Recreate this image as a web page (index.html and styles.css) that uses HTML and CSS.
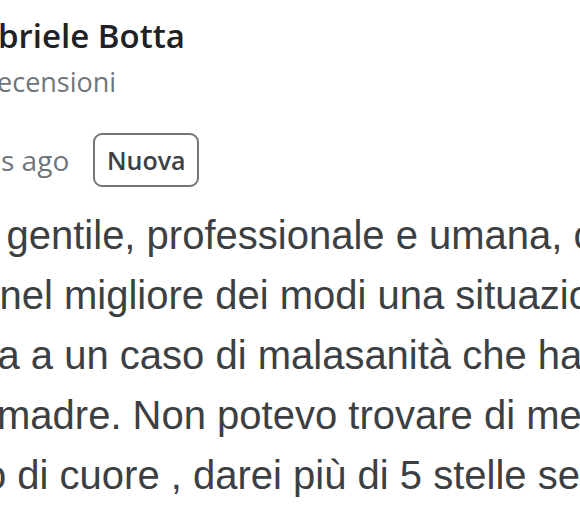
FILE: index.html
```html
<!DOCTYPE html>
<html lang="it">
<head>
<meta charset="utf-8">
<title>Recensione</title>
<link rel="stylesheet" href="styles.css">
</head>
<body>
<div class="review">
  <div class="author">
    <div class="name">briele Botta</div>
    <div class="meta">recensioni</div>
  </div>
  <div class="date-row">
    <span class="date">s ago</span>
    <span class="badge">Nuova</span>
  </div>
  <div class="text">
    <div class="line l1">gentile, professionale e umana, che</div>
    <div class="line l2">nel migliore dei modi una situazione</div>
    <div class="line l3">a a un caso di malasanità che ha</div>
    <div class="line l4">madre. Non potevo trovare di meglio.</div>
    <div class="line l5">o di cuore , darei più di 5 stelle se</div>
  </div>
</div>
</body>
</html>
```

FILE: styles.css
```css
html, body {
  margin: 0;
  padding: 0;
  background: #ffffff;
}
body {
  width: 580px;
  height: 520px;
  overflow: hidden;
}
.review {
  display: flex;
  flex-direction: column;
}
.author {
  padding-top: 16px;
  display: flex;
  flex-direction: column;
  gap: 8px;
  font-family: "Open Sans", "Liberation Sans", sans-serif;
}
.name {
  font-size: 33px;
  line-height: 40px;
  font-weight: 600;
  color: #202124;
  white-space: nowrap;
  margin-left: -2px;
}
.meta {
  font-size: 27px;
  line-height: 36px;
  color: #70757a;
  white-space: nowrap;
  margin-left: -14px;
}
.date-row {
  margin-top: 33px;
  display: flex;
  align-items: center;
  gap: 24px;
  font-family: "Open Sans", "Liberation Sans", sans-serif;
  white-space: nowrap;
}
.date {
  font-size: 28px;
  color: #70757a;
  margin-left: 1px;
}
.badge {
  box-sizing: border-box;
  height: 54px;
  width: 106px;
  display: inline-flex;
  align-items: center;
  justify-content: center;
  border: 2px solid #747775;
  border-radius: 9px;
  font-size: 25px;
  font-weight: 600;
  color: #3c4043;
}
.text {
  margin-top: 18px;
  font-family: "Liberation Sans", Arial, sans-serif;
  font-size: 40px;
  line-height: 60px;
  color: #3c4043;
}
.line {
  white-space: nowrap;
}
.l1 { margin-left: 6.5px; }
.l2 { margin-left: -0.5px; }
.l3 { margin-left: -2.5px; }
.l4 { margin-left: -3px; }
.l5 { margin-left: -16px; }
```
